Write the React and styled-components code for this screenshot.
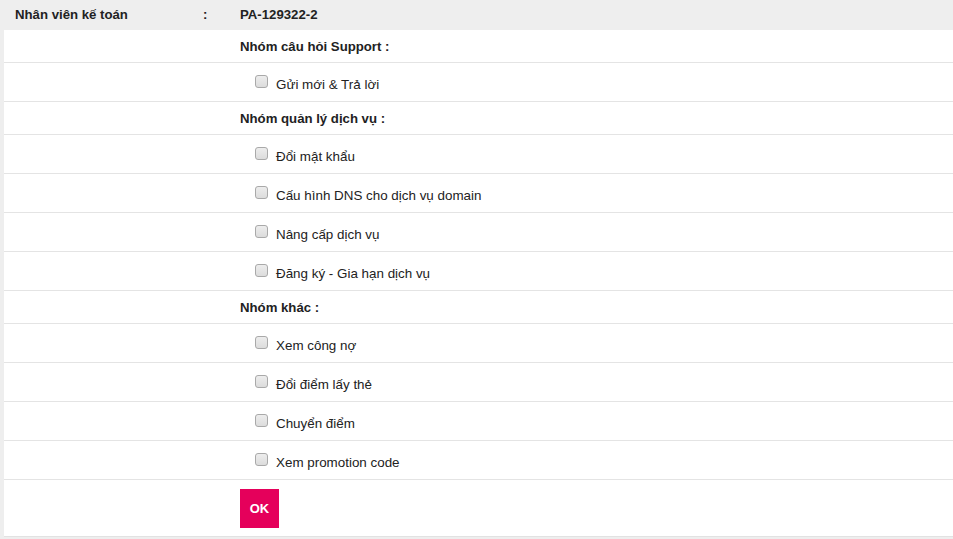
import * as React from 'react'
import styled, {createGlobalStyle} from 'styled-components';

const GlobalStyle = createGlobalStyle`
    html, body {
        margin: 0;
        padding: 0;
        background: #eeeeee;
    }
    body {
        font-family: "Liberation Sans", Arial, sans-serif;
        font-size: 13px;
        color: #222222;
    }
`

const groups = [
    {title: "Nhóm câu hỏi Support :", items: ["Gửi mới & Trả lời"]},
    {title: "Nhóm quản lý dịch vụ :", items: ["Đổi mật khẩu", "Cấu hình DNS cho dịch vụ domain", "Nâng cấp dịch vụ", "Đăng ký - Gia hạn dịch vụ"]},
    {title: "Nhóm khác :", items: ["Xem công nợ", "Đổi điểm lấy thẻ", "Chuyển điểm", "Xem promotion code"]},
];

export default class App extends React.Component {
    render() {
        return (
            <Page>
                <GlobalStyle/>
                <InfoRow>
                    <span className="label">Nhân viên kế toán</span>
                    <span className="colon">:</span>
                    <span className="value">PA-129322-2</span>
                </InfoRow>
                <Panel>
                    {groups.map(group => (
                        <React.Fragment key={group.title}>
                            <Row head>
                                <Cell><GroupTitle>{group.title}</GroupTitle></Cell>
                            </Row>
                            {group.items.map(item => (
                                <Row key={item}>
                                    <Cell>
                                        <Option>
                                            <Check type="checkbox"/>
                                            <span>{item}</span>
                                        </Option>
                                    </Cell>
                                </Row>
                            ))}
                        </React.Fragment>
                    ))}
                    <Footer>
                        <OkButton type="button">OK</OkButton>
                    </Footer>
                </Panel>
            </Page>
        )
    }
}

const Page = styled.div`
    width: 100%;
    min-height: 539px;
    background: #eeeeee;
`

const InfoRow = styled.div`
    display: flex;
    align-items: center;
    height: 30px;
    font-weight: bold;
    font-size: 13.2px;
    padding-bottom: 1px;
    box-sizing: border-box;
    .label {
        width: 188px;
        padding-left: 15px;
    }
    .colon {
        width: 37px;
    }
`

const Panel = styled.div`
    margin-left: 4px;
    background: #ffffff;
    border-bottom: 1px solid #e2e2e2;
`

const Row = styled.div`
    display: grid;
    grid-template-columns: 236px 1fr;
    height: ${props => props.head ? '32px' : '38px'};
    border-bottom: 1px solid #e4e4e4;
`

const Cell = styled.div`
    grid-column: 2;
    display: flex;
    align-items: center;
`

const GroupTitle = styled.span`
    font-weight: bold;
    font-size: 13.2px;
    padding-top: 1px;
`

const Option = styled.label`
    display: flex;
    align-items: center;
    padding-left: 15px;
    padding-top: 2px;
    span {
        margin-left: 8px;
        padding-top: 3px;
        font-size: 13.4px;
    }
`

const Check = styled.input`
    appearance: none;
    width: 13px;
    height: 13px;
    margin: 0 0 4px 0;
    border: 1px solid #a9a9a9;
    border-radius: 3px;
    background: linear-gradient(#ededed, #dcdcdc);
`

const Footer = styled.div`
    height: 56px;
    padding: 9px 0 0 236px;
    box-sizing: border-box;
`

const OkButton = styled.button`
    width: 39px;
    height: 39px;
    border: 0;
    outline: 0;
    padding: 0;
    background: #e5005b;
    color: #ffffff;
    font-family: "Liberation Sans", Arial, sans-serif;
    font-size: 13px;
    font-weight: bold;
    cursor: pointer;
`
